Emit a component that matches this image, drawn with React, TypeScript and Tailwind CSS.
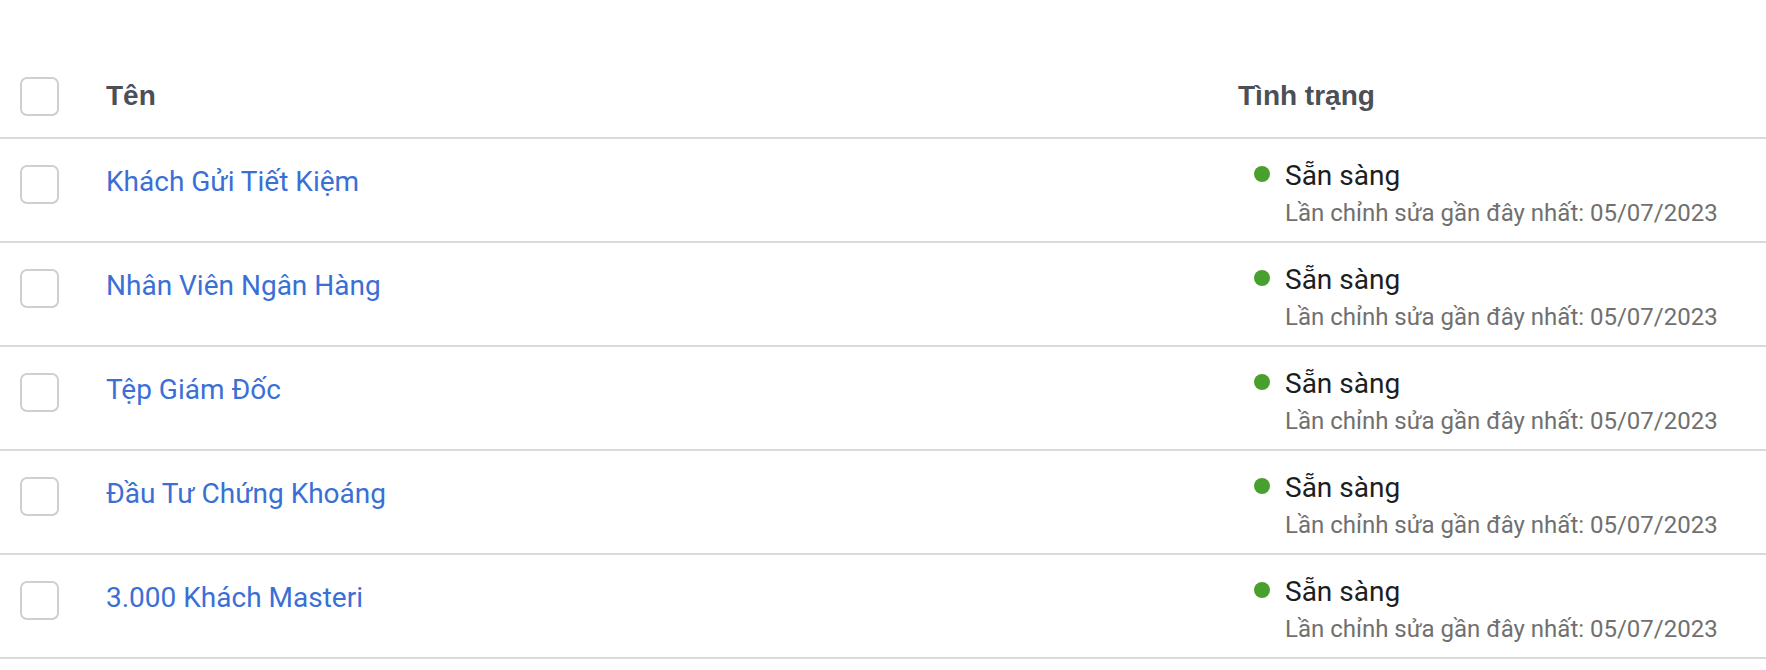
const audiences = [
	"Khách Gửi Tiết Kiệm",
	"Nhân Viên Ngân Hàng",
	"Tệp Giám Đốc",
	"Đầu Tư Chứng Khoáng",
	"3.000 Khách Masteri",
];

const Checkbox = () => (
	<div className="w-[39px] h-[39px] rounded-[7px] border-2 border-[#ccd0d5] bg-white" />
);

const App = () => {
	return (
		<main className="w-full min-h-screen bg-white font-['Roboto',_'Liberation_Sans',_sans-serif]">
			{/* Header */}
			<div className="grid grid-cols-[86px_1132px_1fr] items-center h-[139px] pt-[55px] pl-[20px] border-b-2 border-[#d9d9d9]">
				<Checkbox />
				<div className="font-['Liberation_Sans',_Arial,_sans-serif] text-[28px] leading-[32px] font-bold text-[#4b4f56]">
					Tên
				</div>
				<div className="font-['Liberation_Sans',_Arial,_sans-serif] text-[28px] leading-[32px] font-bold text-[#4b4f56]">
					Tình trạng
				</div>
			</div>

			{/* Rows */}
			{audiences.map((name) => (
				<div
					key={name}
					className="grid grid-cols-[86px_1132px_1fr] items-start h-[104px] pt-[26px] pl-[20px] border-b-2 border-[#d9d9d9]"
				>
					<Checkbox />
					<div className="mt-[1px] text-[28px] leading-[32px] text-[#3a6fd6]">{name}</div>
					<div className="flex items-start -mt-[4px] pl-[16px]">
						<span className="mt-[5px] w-[16px] h-[16px] shrink-0 rounded-full bg-[#4aa02f]" />
						<div className="ml-[15px]">
							<div className="text-[28px] leading-[30px] text-[#1c1e21]">Sẵn sàng</div>
							<div className="mt-[7px] text-[24px] leading-[30px] text-[#707070]">
								Lần chỉnh sửa gần đây nhất: 05/07/2023
							</div>
						</div>
					</div>
				</div>
			))}
		</main>
	);
};

export default App;
